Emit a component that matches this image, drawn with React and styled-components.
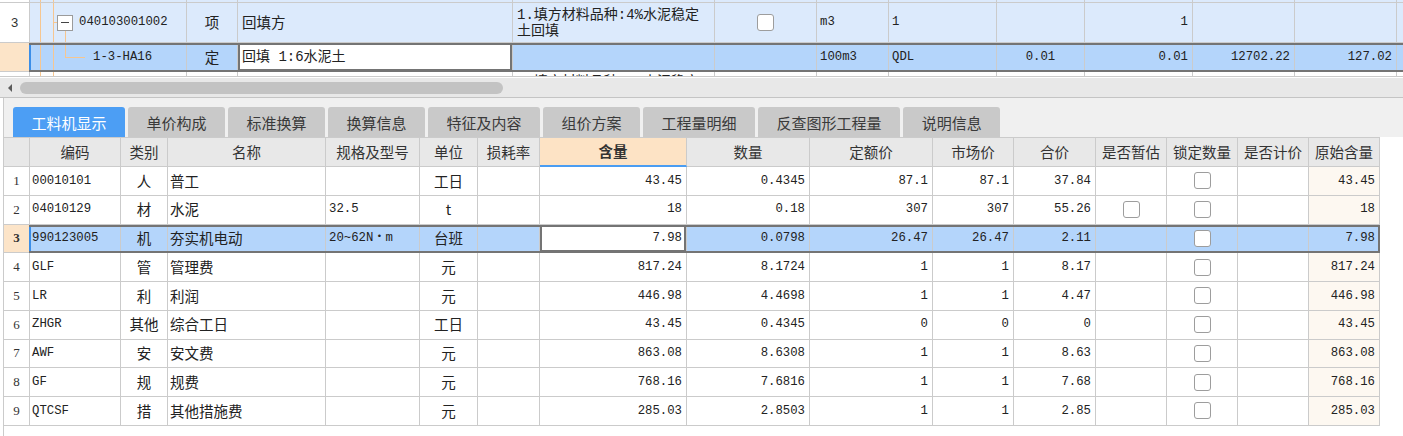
import React from 'react'
import styled, { createGlobalStyle, css } from 'styled-components'

const cjk = `"Noto Sans CJK SC", "Noto Sans", sans-serif`
const mono = `"Liberation Mono", "Noto Sans CJK SC", monospace`
const sans = `"Liberation Sans", "Noto Sans CJK SC", sans-serif`
const serif = `"Liberation Serif", "Noto Sans CJK SC", serif`

const line = '#cbcbcb'
const selBorder = '#747474'
const accent = '#3b8ee8'
const selBlue = '#b4d5fb'
const rowBlue = '#dceafc'
const orange = '#fce4c8'
const cream = '#fdf8f1'
const treeLine = '#f6c690'
const headBg = '#e8e8e8'

const px = cols => cols.map(c => `${c}px`).join(' ')
const topTemplate = `${px([157, 51, 275, 202, 102, 72, 108, 88, 108, 102, 102])} 1fr`

const GlobalStyle = createGlobalStyle`
  html, body {
    margin: 0;
    padding: 0;
    background: #fff;
  }
  body {
    font-family: ${cjk};
    color: #222;
  }
`

const Page = styled.div`
    width: 1403px;
    height: 436px;
    overflow: hidden;
    display: flex;
    flex-direction: column;
    background: #fff;
`

const TopGrid = styled.div`
    height: 77px;
    flex-shrink: 0;
    overflow: hidden;
    display: flex;
    flex-direction: column;
`

const Row = styled.div`
    display: flex;
    height: ${props => props.$h}px;
    flex-shrink: 0;
    overflow: hidden;
`

const NumCell = styled.div`
    width: ${props => props.$w}px;
    flex-shrink: 0;
    box-sizing: border-box;
    border-right: 1px solid ${line};
    border-bottom: 1px solid ${line};
    background: ${props => props.$bg || '#fff'};
    display: flex;
    align-items: center;
    justify-content: center;
    font-family: ${props => props.$serif ? serif : sans};
    font-size: 13px;
    font-weight: ${props => props.$bold ? 700 : 400};
    color: #333;
`

const Cells = styled.div`
    flex: ${props => props.$fill ? 1 : 'none'};
    display: grid;
    grid-template-columns: ${props => props.$cols};
    grid-template-rows: 100%;
    position: relative;
    background: ${props => props.$bg || 'transparent'};
    ${props => props.$selected && css`
        &::after {
            content: '';
            position: absolute;
            top: 0;
            bottom: 0;
            right: 0;
            left: -1px;
            border-top: 2px solid ${selBorder};
            border-bottom: 2px solid ${selBorder};
            border-right: ${props.$closed ? `2px solid ${selBorder}` : '0'};
            box-shadow: inset 2px 0 0 ${accent};
            pointer-events: none;
        }
    `}
`

const fonts = {
    cjk: [cjk, '14.5px'],
    mono: [mono, '12.3px'],
    mix: [mono, '14px'],
}

const Cell = styled.div`
    box-sizing: border-box;
    min-width: 0;
    border-right: 1px solid ${line};
    border-bottom: 1px solid ${line};
    display: flex;
    align-items: ${props => props.$top ? 'flex-start' : 'center'};
    justify-content: ${props => props.$align === 'right' ? 'flex-end' : props.$align === 'center' ? 'center' : 'flex-start'};
    padding: ${props => props.$top ? '3px' : 0} ${props => props.$pad ?? 4}px 0;
    font-family: ${props => fonts[props.$font || 'cjk'][0]};
    font-size: ${props => fonts[props.$font || 'cjk'][1]};
    line-height: ${props => props.$lh || 1};
    white-space: nowrap;
    overflow: hidden;
    background: ${props => props.$bg || 'transparent'};
    color: #222;
    ${props => props.$current && css`
        background: #fff;
        box-shadow: inset 0 0 0 2px ${selBorder};
    `}
`

const guide = (x, y, w, h) =>
    `linear-gradient(${treeLine}, ${treeLine}) ${x}px ${y}px / ${w}px ${h} no-repeat`

const TreeCell = styled(Cell)`
    padding-left: ${props => props.$indent || 0}px;
    background: ${props => [guide(10, 0, 1, '100%'), guide(23, 0, 1, '100%'), ...(props.$links || [])].join(', ')};
`

const ExpandBox = styled.span`
    width: 16px;
    height: 16px;
    box-sizing: border-box;
    margin: 0 6px 0 27px;
    border: 1px solid #9b9b9b;
    background: #fff;
    display: inline-flex;
    align-items: center;
    justify-content: center;
    flex-shrink: 0;

    &::before {
        content: '';
        width: 8px;
        height: 1px;
        background: #444;
    }
`

const Check = styled.span`
    width: 17px;
    height: 17px;
    box-sizing: border-box;
    border: 1px solid #9d9d9d;
    border-radius: 3px;
    background: #fff;
    display: inline-block;
`

const Scroll = styled.div`
    height: 21px;
    flex-shrink: 0;
    box-sizing: border-box;
    border-top: 1px solid #fff;
    border-bottom: 1px solid #c4c4c4;
    background: #e8e8e8;
    display: flex;
    align-items: center;
`

const Arrow = styled.span`
    width: 20px;
    display: flex;
    justify-content: center;

    &::before {
        content: '';
        border-top: 4px solid transparent;
        border-bottom: 4px solid transparent;
        border-right: 4px solid #5c5c5c;
    }
`

const Thumb = styled.span`
    width: 483px;
    height: 12px;
    border-radius: 6px;
    background: #c3c3c3;
`

const Panel = styled.div`
    flex: 1;
    margin-left: 3px;
    border-left: 1px solid ${line};
    display: flex;
    flex-direction: column;
`

const TabBar = styled.div`
    height: 39px;
    box-sizing: border-box;
    padding: 9px 0 0 9px;
    background: #f0f0f0;
    display: flex;
    align-items: flex-end;
    gap: 3px;
`

const Tab = styled.div`
    height: 30px;
    padding: 0 18.5px;
    border-radius: 3px 3px 0 0;
    display: flex;
    align-items: center;
    font-family: ${cjk};
    font-size: 15px;
    line-height: 1;
    background: ${props => props.$active ? '#4c9ef4' : '#c9c9c9'};
    color: ${props => props.$active ? '#fff' : '#3a3a3a'};
`

const Table = styled.div`
    display: flex;
    flex-direction: column;
    border-top: 1px solid ${line};
    width: fit-content;
`

const HeadCell = styled(Cell)`
    justify-content: center;
    background: ${props => props.$active ? '#fde3c5' : headBg};
    font-weight: ${props => props.$active ? 700 : 400};
    color: #333;
    ${props => props.$active && css`border-bottom: 2px solid #4a9df2;`}
`

const columns = [
    { title: '编码', w: 91, font: 'mono', pad: 2 },
    { title: '类别', w: 47, align: 'center', pad: 0 },
    { title: '名称', w: 158, pad: 2 },
    { title: '规格及型号', w: 94, font: 'mono', pad: 3 },
    { title: '单位', w: 58, align: 'center', pad: 0 },
    { title: '损耗率', w: 62, font: 'mono', align: 'right' },
    { title: '含量', w: 147, font: 'mono', align: 'right', active: true },
    { title: '数量', w: 123, font: 'mono', align: 'right' },
    { title: '定额价', w: 123, font: 'mono', align: 'right' },
    { title: '市场价', w: 81, font: 'mono', align: 'right' },
    { title: '合价', w: 82, font: 'mono', align: 'right' },
    { title: '是否暂估', w: 71, align: 'center', check: true },
    { title: '锁定数量', w: 71, align: 'center', check: true },
    { title: '是否计价', w: 71, align: 'center', check: true },
    { title: '原始含量', w: 71, font: 'mono', align: 'right', bg: cream },
]
const bottomTemplate = px(columns.map(c => c.w))

const rows = [
    ['00010101', '人', '普工', '', '工日', '', '43.45', '0.4345', '87.1', '87.1', '37.84', null, false, null, '43.45'],
    ['04010129', '材', '水泥', '32.5', 't', '', '18', '0.18', '307', '307', '55.26', false, false, null, '18'],
    ['990123005', '机', '夯实机电动', '20~62N・m', '台班', '', '7.98', '0.0798', '26.47', '26.47', '2.11', null, false, null, '7.98'],
    ['GLF', '管', '管理费', '', '元', '', '817.24', '8.1724', '1', '1', '8.17', null, false, null, '817.24'],
    ['LR', '利', '利润', '', '元', '', '446.98', '4.4698', '1', '1', '4.47', null, false, null, '446.98'],
    ['ZHGR', '其他', '综合工日', '', '工日', '', '43.45', '0.4345', '0', '0', '0', null, false, null, '43.45'],
    ['AWF', '安', '安文费', '', '元', '', '863.08', '8.6308', '1', '1', '8.63', null, false, null, '863.08'],
    ['GF', '规', '规费', '', '元', '', '768.16', '7.6816', '1', '1', '7.68', null, false, null, '768.16'],
    ['QTCSF', '措', '其他措施费', '', '元', '', '285.03', '2.8503', '1', '1', '2.85', null, false, null, '285.03'],
]

const tabs = ['工料机显示', '单价构成', '标准换算', '换算信息', '特征及内容', '组价方案', '工程量明细', '反查图形工程量', '说明信息']

const selectedRow = 2

const TopSection = () => (
    <TopGrid>
        <Row $h={3}>
            <NumCell $w={30} />
            <Cells $fill $cols={topTemplate} $bg={rowBlue}>
                <TreeCell />
                {Array.from({ length: 11 }, (_, i) => <Cell key={i} />)}
            </Cells>
        </Row>
        <Row $h={40}>
            <NumCell $w={30}>3</NumCell>
            <Cells $fill $cols={topTemplate} $bg={rowBlue}>
                <TreeCell $font="mono" $links={[guide(23, 19, 4, '1px'), guide(35, 27, 1, '100%')]}>
                    <ExpandBox />040103001002
                </TreeCell>
                <Cell $align="center" $pad={0}>项</Cell>
                <Cell>回填方</Cell>
                <Cell $font="mix" $lh="16px">1.填方材料品种:4%水泥稳定<br />土回填</Cell>
                <Cell $align="center"><Check /></Cell>
                <Cell $font="mono" $pad={3}>m3</Cell>
                <Cell $font="mono" $pad={3}>1</Cell>
                <Cell />
                <Cell $font="mono" $align="right">1</Cell>
                <Cell />
                <Cell />
                <Cell />
            </Cells>
        </Row>
        <Row $h={29}>
            <NumCell $w={30} $bg={orange} />
            <Cells $fill $cols={topTemplate} $bg={selBlue} $selected>
                <TreeCell $font="mono" $indent={63} $links={[guide(35, 0, 1, '15px'), guide(35, 14, 20, '1px')]}>
                    1-3-HA16
                </TreeCell>
                <Cell $align="center" $pad={0}>定</Cell>
                <Cell $font="mix" $current>回填 1:6水泥土</Cell>
                <Cell />
                <Cell />
                <Cell $font="mono" $pad={3}>100m3</Cell>
                <Cell $font="mono" $pad={3}>QDL</Cell>
                <Cell $font="mono" $align="center">0.01</Cell>
                <Cell $font="mono" $align="right">0.01</Cell>
                <Cell $font="mono" $align="right">12702.22</Cell>
                <Cell $font="mono" $align="right">127.02</Cell>
                <Cell />
            </Cells>
        </Row>
        <Row $h={5}>
            <NumCell $w={30} />
            <Cells $fill $cols={topTemplate} $bg="#fff">
                <TreeCell />
                <Cell />
                <Cell />
                <Cell $font="mix" $top>2.填方材料品种:6%水泥稳定</Cell>
                {Array.from({ length: 8 }, (_, i) => <Cell key={i} />)}
            </Cells>
        </Row>
    </TopGrid>
)

const renderValue = (col, value) => {
    if (col.check) return value === null ? null : <Check />
    return value
}

const App = () => (
    <Page>
        <GlobalStyle />
        <TopSection />
        <Scroll>
            <Arrow />
            <Thumb />
        </Scroll>
        <Panel>
            <TabBar>
                {tabs.map((t, i) => <Tab key={t} $active={i === 0}>{t}</Tab>)}
            </TabBar>
            <Table>
                <Row $h={29}>
                    <NumCell $w={26} $bg={headBg} />
                    <Cells $cols={bottomTemplate}>
                        {columns.map(c => (
                            <HeadCell key={c.title} $active={c.active} $pad={0}>{c.title}</HeadCell>
                        ))}
                    </Cells>
                </Row>
                {rows.map((r, i) => {
                    const sel = i === selectedRow
                    return (
                        <Row key={r[0]} $h={28.75}>
                            <NumCell $w={26} $serif $bg={sel ? orange : '#fff'} $bold={sel}>{i + 1}</NumCell>
                            <Cells $cols={bottomTemplate} $bg={sel ? selBlue : '#fff'} $selected={sel} $closed>
                                {columns.map((c, j) => (
                                    <Cell
                                        key={c.title}
                                        $font={c.font}
                                        $align={c.align}
                                        $pad={c.pad}
                                        $bg={sel ? undefined : c.bg}
                                        $current={sel && c.active}
                                    >
                                        {renderValue(c, r[j])}
                                    </Cell>
                                ))}
                            </Cells>
                        </Row>
                    )
                })}
            </Table>
        </Panel>
    </Page>
)

export default App
